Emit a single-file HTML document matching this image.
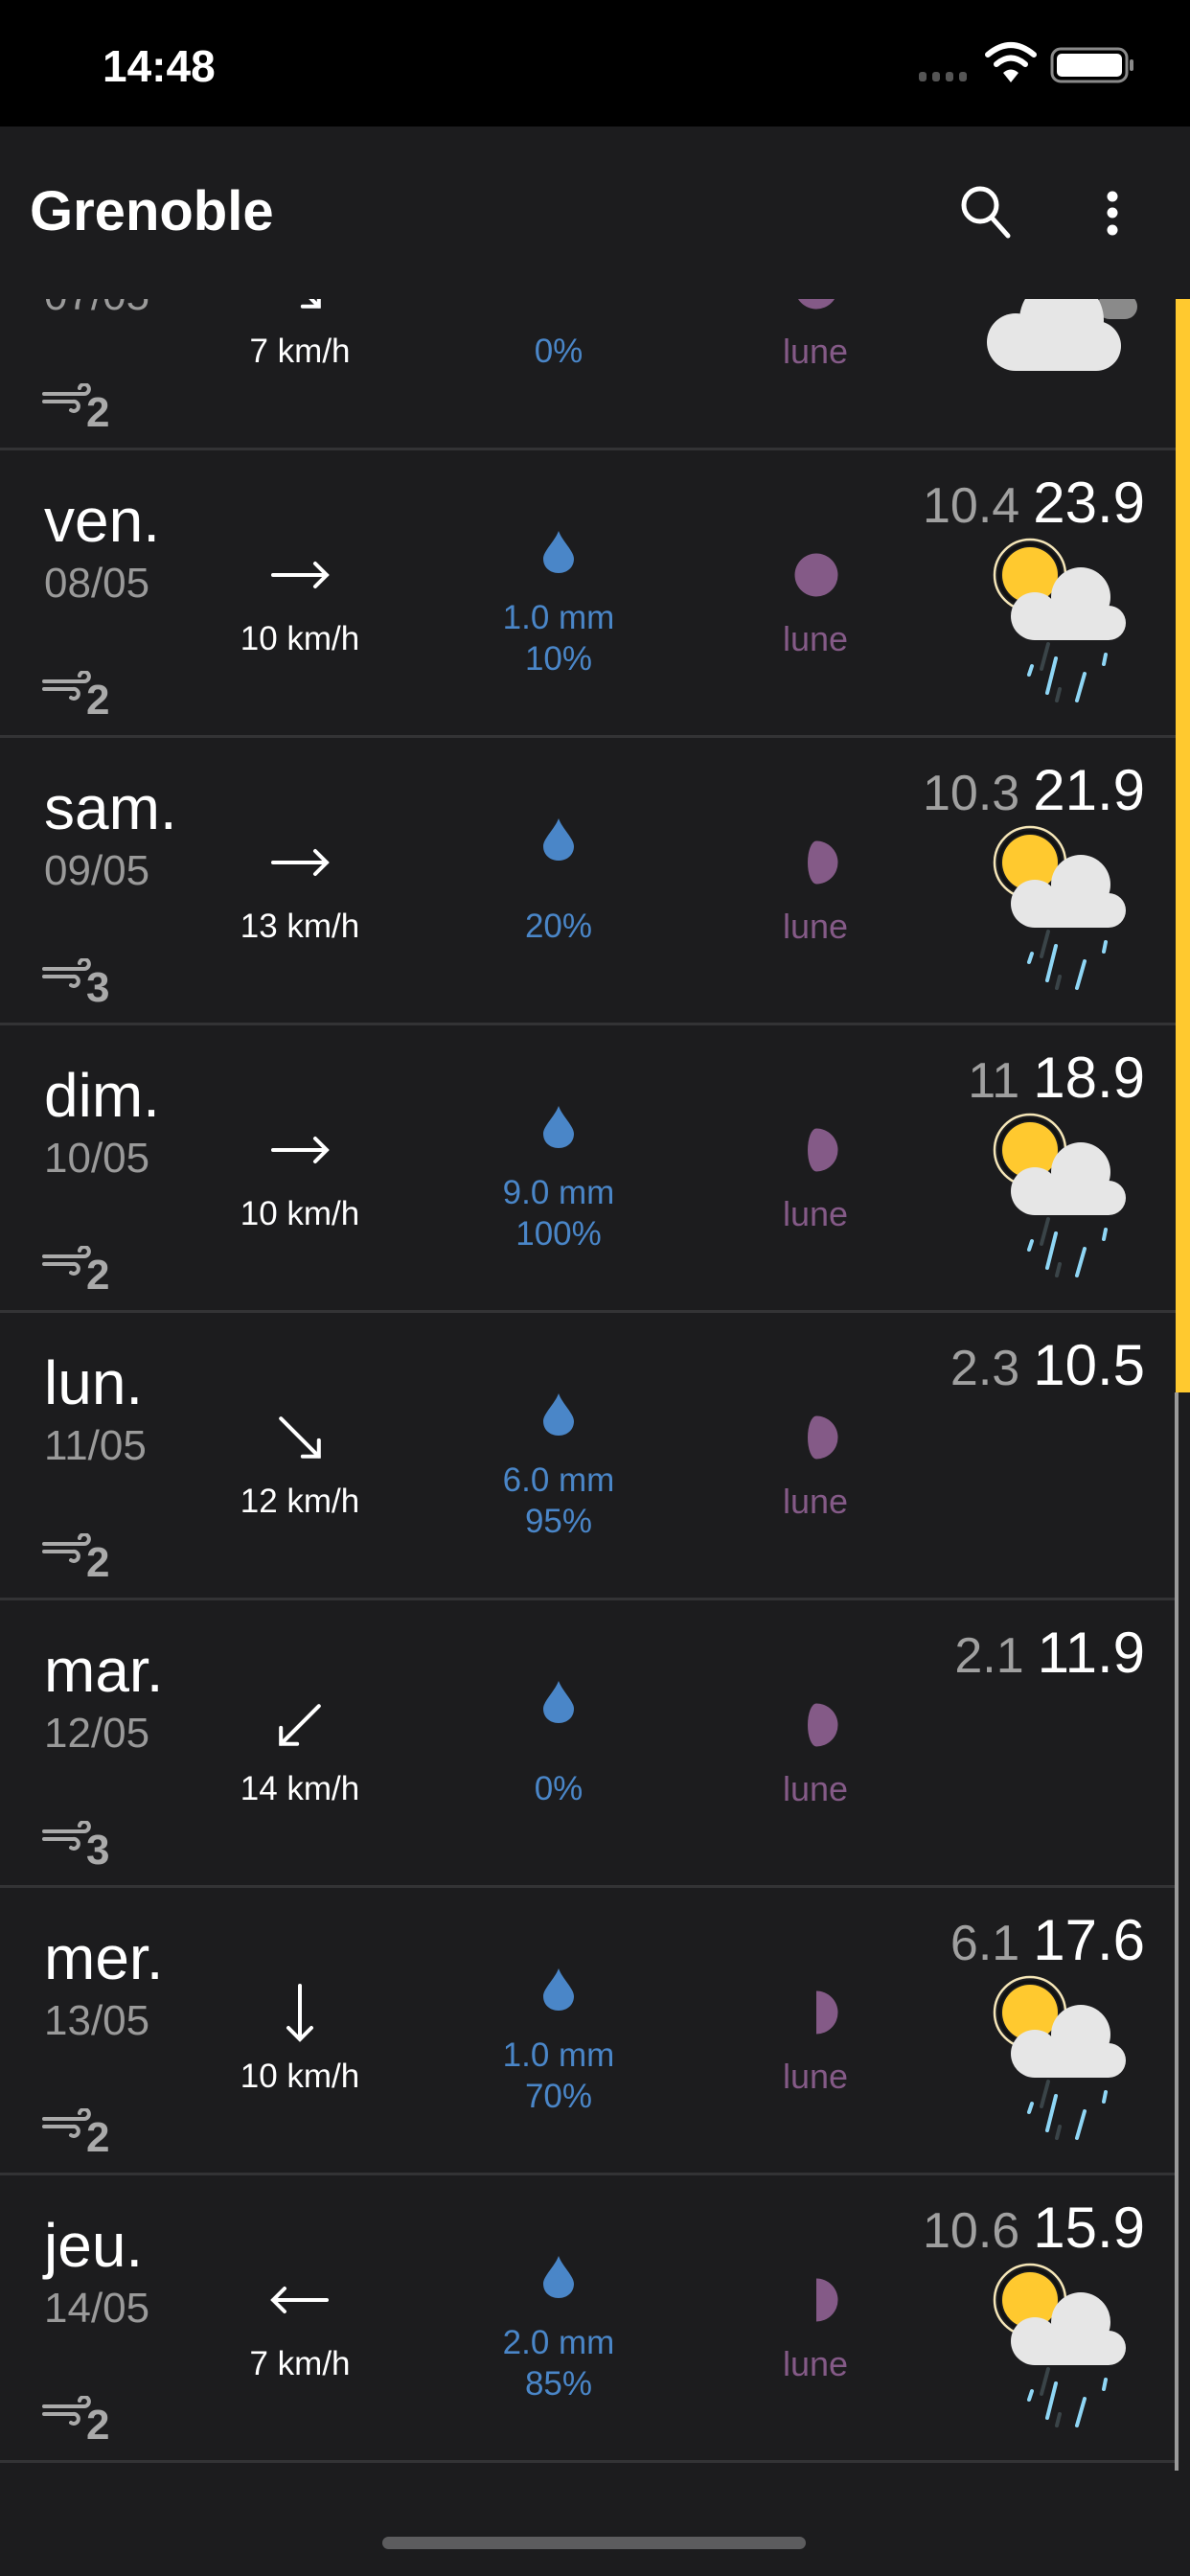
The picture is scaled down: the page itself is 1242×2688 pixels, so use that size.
<!DOCTYPE html>
<html><head><meta charset="utf-8">
<style>
*{margin:0;padding:0;box-sizing:border-box}
html,body{width:1242px;height:2688px;background:#1c1c1e;overflow:hidden;font-family:"Liberation Sans",sans-serif}
.status{position:absolute;left:0;top:0;width:1242px;height:132px;background:#000}
.hdr{position:absolute;left:0;top:132px;width:1242px;height:180px;background:#1c1c1e}
.list{position:absolute;left:0;top:312px;width:1242px;height:2376px;overflow:hidden}
.row{position:absolute;left:0;width:1227px;height:300px}
.sep{position:absolute;left:0;top:298px;width:1227px;height:3px;background:#333335}
.t{position:absolute;line-height:1;white-space:nowrap}
.day{left:46px;top:42px;font-size:64px;color:#fff}
.date{left:46px;top:118px;font-size:44px;color:#9a9a9a}
.ws{left:213px;width:200px;text-align:center;top:180px;font-size:35px;color:#fff}
.p{left:483px;width:200px;text-align:center;font-size:35px;color:#4a86c8}
.lune{left:751px;width:200px;text-align:center;top:180px;font-size:36px;color:#845a87}
.temp{right:32px;top:26px;font-size:60px;color:#fff}
.temp span{font-size:52px;color:#a0a0a0;margin-right:14px}
.wind{position:absolute;left:30px;top:231px}
.arr{position:absolute;left:273px;top:91px}
.drop{position:absolute;left:567px;top:85px}
.moon{position:absolute;left:827px;top:106px}
.wx{position:absolute;left:1030px;top:80px}
</style></head><body>
<div class="status">
  <div class="t" style="left:107px;top:46px;font-size:46px;font-weight:bold;color:#fff">14:48</div>
  <svg style="position:absolute;left:955px;top:40px" width="240" height="56">
    <g fill="#555"><rect x="4" y="35" width="8" height="10" rx="3"/><rect x="18" y="35" width="8" height="10" rx="3"/><rect x="32" y="35" width="8" height="10" rx="3"/><rect x="46" y="35" width="8" height="10" rx="3"/></g>
    <g fill="none" stroke="#fff" stroke-width="6" stroke-linecap="round">
      <path d="M76 17 Q100 -3 124 17"/><path d="M85 27 Q100 14 115 27"/>
    </g>
    <path d="M92 36 Q100 29 108 36 L100 46 Z" fill="#fff"/>
    <rect x="143" y="11" width="78" height="34" rx="9" fill="none" stroke="#8a8a8a" stroke-width="3"/>
    <rect x="148" y="16" width="68" height="24" rx="5" fill="#fff"/>
    <rect x="224" y="22" width="4" height="12" rx="2" fill="#8a8a8a"/>
  </svg>
</div>
<div class="hdr">
  <div class="t" style="left:31px;top:60px;font-size:58px;font-weight:bold;color:#fff">Grenoble</div>
  <svg style="position:absolute;left:995px;top:58px" width="70" height="70">
    <circle cx="28" cy="24" r="17" fill="none" stroke="#fff" stroke-width="5"/>
    <path d="M40 37 L57 56" stroke="#fff" stroke-width="5" stroke-linecap="round"/>
  </svg>
  <svg style="position:absolute;left:1150px;top:58px" width="24" height="60">
    <circle cx="11" cy="15" r="5.5" fill="#fff"/><circle cx="11" cy="32" r="5.5" fill="#fff"/><circle cx="11" cy="50" r="5.5" fill="#fff"/>
  </svg>
</div>

<div class="list">
<div class="row" style="top:-143px">
  <div class="t date">07/05</div>
  <svg class="arr" width="80" height="80"><g transform="rotate(45 40 40)" fill="none" stroke="#fff" stroke-width="4" stroke-linecap="round"><path d="M12 40 H68 M56 28 L68 40 L56 52"/></g></svg>
  <div class="t ws">7 km/h</div>
  <svg class="drop" width="32" height="44"><path d="M16 0 C12 11 0 21 0 29 C0 38 7 44 16 44 C25 44 32 38 32 29 C32 21 20 11 16 0Z" fill="#4a86c8"/></svg>
  <div class="t p" style="top:180px">0%</div>
  <svg class="moon" width="50" height="50"><circle cx="25" cy="25" r="22.5" fill="#845a87"/></svg>
  <div class="t lune">lune</div>
  <svg style="position:absolute;left:0;top:0" width="1227" height="300">
    <rect x="1145" y="138" width="42" height="26" rx="13" fill="#8a8a8a"/>
    <g fill="#e6e6e6"><circle cx="1060" cy="188" r="30"/><circle cx="1108" cy="165" r="44"/><circle cx="1144" cy="192" r="26"/><rect x="1060" y="175" width="84" height="43"/></g>
  </svg>
  <svg class="wind" width="100" height="70"><g fill="none" stroke="#aaa" stroke-width="4" stroke-linecap="round"><path d="M16 11 H58 a5 5 0 1 0 -5 -6"/><path d="M16 19 H46 a5 5 0 1 1 -2 9"/></g><text x="60" y="45" font-family="Liberation Sans" font-weight="bold" font-size="44" fill="#aaa">2</text></svg>
  <div class="sep"></div>
</div>

<div class="row" style="top:157px">
  <div class="t day">ven.</div><div class="t date">08/05</div>
  <svg class="arr" width="80" height="80"><g fill="none" stroke="#fff" stroke-width="4" stroke-linecap="round"><path d="M12 40 H68 M56 28 L68 40 L56 52"/></g></svg>
  <div class="t ws">10 km/h</div>
  <svg class="drop" width="32" height="44"><path d="M16 0 C12 11 0 21 0 29 C0 38 7 44 16 44 C25 44 32 38 32 29 C32 21 20 11 16 0Z" fill="#4a86c8"/></svg>
  <div class="t p" style="top:158px">1.0 mm</div><div class="t p" style="top:201px">10%</div>
  <svg class="moon" width="50" height="50"><circle cx="25" cy="25" r="22.5" fill="#845a87"/></svg>
  <div class="t lune">lune</div>
  <div class="t temp"><span>10.4</span>23.9</div>
  <svg class="wx" width="160" height="185"><g><circle cx="45" cy="51" r="37" fill="none" stroke="#f5e6b8" stroke-width="2.5"/><circle cx="45" cy="51" r="32" fill="none" stroke="#111" stroke-width="3"/><circle cx="45" cy="51" r="29" fill="#ffc92f"/></g><g fill="#e6e6e6"><circle cx="50" cy="94" r="25"/><circle cx="98" cy="74" r="31"/><circle cx="127" cy="101" r="18"/><rect x="50" y="90" width="77" height="29"/></g><g stroke-width="4" stroke-linecap="round"><path d="M64 123 L57 149 M76 170 L73 182" stroke="#3a4448"/><path d="M72 138 L63 174 M47 146 L44 155 M102 154 L94 182 M124 134 L122 144" stroke="#8fd6f5"/></g></svg>
  <svg class="wind" width="100" height="70"><g fill="none" stroke="#aaa" stroke-width="4" stroke-linecap="round"><path d="M16 11 H58 a5 5 0 1 0 -5 -6"/><path d="M16 19 H46 a5 5 0 1 1 -2 9"/></g><text x="60" y="45" font-family="Liberation Sans" font-weight="bold" font-size="44" fill="#aaa">2</text></svg>
  <div class="sep"></div>
</div>

<div class="row" style="top:457px">
  <div class="t day">sam.</div><div class="t date">09/05</div>
  <svg class="arr" width="80" height="80"><g fill="none" stroke="#fff" stroke-width="4" stroke-linecap="round"><path d="M12 40 H68 M56 28 L68 40 L56 52"/></g></svg>
  <div class="t ws">13 km/h</div>
  <svg class="drop" width="32" height="44"><path d="M16 0 C12 11 0 21 0 29 C0 38 7 44 16 44 C25 44 32 38 32 29 C32 21 20 11 16 0Z" fill="#4a86c8"/></svg>
  <div class="t p" style="top:180px">20%</div>
  <svg class="moon" width="50" height="50"><path d="M25 2.5 A22.5 22.5 0 0 1 25 47.5 A9 22.5 0 0 1 25 2.5Z" fill="#845a87"/></svg>
  <div class="t lune">lune</div>
  <div class="t temp"><span>10.3</span>21.9</div>
  <svg class="wx" width="160" height="185"><g><circle cx="45" cy="51" r="37" fill="none" stroke="#f5e6b8" stroke-width="2.5"/><circle cx="45" cy="51" r="32" fill="none" stroke="#111" stroke-width="3"/><circle cx="45" cy="51" r="29" fill="#ffc92f"/></g><g fill="#e6e6e6"><circle cx="50" cy="94" r="25"/><circle cx="98" cy="74" r="31"/><circle cx="127" cy="101" r="18"/><rect x="50" y="90" width="77" height="29"/></g><g stroke-width="4" stroke-linecap="round"><path d="M64 123 L57 149 M76 170 L73 182" stroke="#3a4448"/><path d="M72 138 L63 174 M47 146 L44 155 M102 154 L94 182 M124 134 L122 144" stroke="#8fd6f5"/></g></svg>
  <svg class="wind" width="100" height="70"><g fill="none" stroke="#aaa" stroke-width="4" stroke-linecap="round"><path d="M16 11 H58 a5 5 0 1 0 -5 -6"/><path d="M16 19 H46 a5 5 0 1 1 -2 9"/></g><text x="60" y="45" font-family="Liberation Sans" font-weight="bold" font-size="44" fill="#aaa">3</text></svg>
  <div class="sep"></div>
</div>

<div class="row" style="top:757px">
  <div class="t day">dim.</div><div class="t date">10/05</div>
  <svg class="arr" width="80" height="80"><g fill="none" stroke="#fff" stroke-width="4" stroke-linecap="round"><path d="M12 40 H68 M56 28 L68 40 L56 52"/></g></svg>
  <div class="t ws">10 km/h</div>
  <svg class="drop" width="32" height="44"><path d="M16 0 C12 11 0 21 0 29 C0 38 7 44 16 44 C25 44 32 38 32 29 C32 21 20 11 16 0Z" fill="#4a86c8"/></svg>
  <div class="t p" style="top:158px">9.0 mm</div><div class="t p" style="top:201px">100%</div>
  <svg class="moon" width="50" height="50"><path d="M25 2.5 A22.5 22.5 0 0 1 25 47.5 A9 22.5 0 0 1 25 2.5Z" fill="#845a87"/></svg>
  <div class="t lune">lune</div>
  <div class="t temp"><span>11</span>18.9</div>
  <svg class="wx" width="160" height="185"><g><circle cx="45" cy="51" r="37" fill="none" stroke="#f5e6b8" stroke-width="2.5"/><circle cx="45" cy="51" r="32" fill="none" stroke="#111" stroke-width="3"/><circle cx="45" cy="51" r="29" fill="#ffc92f"/></g><g fill="#e6e6e6"><circle cx="50" cy="94" r="25"/><circle cx="98" cy="74" r="31"/><circle cx="127" cy="101" r="18"/><rect x="50" y="90" width="77" height="29"/></g><g stroke-width="4" stroke-linecap="round"><path d="M64 123 L57 149 M76 170 L73 182" stroke="#3a4448"/><path d="M72 138 L63 174 M47 146 L44 155 M102 154 L94 182 M124 134 L122 144" stroke="#8fd6f5"/></g></svg>
  <svg class="wind" width="100" height="70"><g fill="none" stroke="#aaa" stroke-width="4" stroke-linecap="round"><path d="M16 11 H58 a5 5 0 1 0 -5 -6"/><path d="M16 19 H46 a5 5 0 1 1 -2 9"/></g><text x="60" y="45" font-family="Liberation Sans" font-weight="bold" font-size="44" fill="#aaa">2</text></svg>
  <div class="sep"></div>
</div>

<div class="row" style="top:1057px">
  <div class="t day">lun.</div><div class="t date">11/05</div>
  <svg class="arr" width="80" height="80"><g transform="rotate(45 40 40)" fill="none" stroke="#fff" stroke-width="4" stroke-linecap="round"><path d="M12 40 H68 M56 28 L68 40 L56 52"/></g></svg>
  <div class="t ws">12 km/h</div>
  <svg class="drop" width="32" height="44"><path d="M16 0 C12 11 0 21 0 29 C0 38 7 44 16 44 C25 44 32 38 32 29 C32 21 20 11 16 0Z" fill="#4a86c8"/></svg>
  <div class="t p" style="top:158px">6.0 mm</div><div class="t p" style="top:201px">95%</div>
  <svg class="moon" width="50" height="50"><path d="M25 2.5 A22.5 22.5 0 0 1 25 47.5 A9 22.5 0 0 1 25 2.5Z" fill="#845a87"/></svg>
  <div class="t lune">lune</div>
  <div class="t temp"><span>2.3</span>10.5</div>
  <svg class="wind" width="100" height="70"><g fill="none" stroke="#aaa" stroke-width="4" stroke-linecap="round"><path d="M16 11 H58 a5 5 0 1 0 -5 -6"/><path d="M16 19 H46 a5 5 0 1 1 -2 9"/></g><text x="60" y="45" font-family="Liberation Sans" font-weight="bold" font-size="44" fill="#aaa">2</text></svg>
  <div class="sep"></div>
</div>

<div class="row" style="top:1357px">
  <div class="t day">mar.</div><div class="t date">12/05</div>
  <svg class="arr" width="80" height="80"><g transform="rotate(135 40 40)" fill="none" stroke="#fff" stroke-width="4" stroke-linecap="round"><path d="M12 40 H68 M56 28 L68 40 L56 52"/></g></svg>
  <div class="t ws">14 km/h</div>
  <svg class="drop" width="32" height="44"><path d="M16 0 C12 11 0 21 0 29 C0 38 7 44 16 44 C25 44 32 38 32 29 C32 21 20 11 16 0Z" fill="#4a86c8"/></svg>
  <div class="t p" style="top:180px">0%</div>
  <svg class="moon" width="50" height="50"><path d="M25 2.5 A22.5 22.5 0 0 1 25 47.5 A9 22.5 0 0 1 25 2.5Z" fill="#845a87"/></svg>
  <div class="t lune">lune</div>
  <div class="t temp"><span>2.1</span>11.9</div>
  <svg class="wind" width="100" height="70"><g fill="none" stroke="#aaa" stroke-width="4" stroke-linecap="round"><path d="M16 11 H58 a5 5 0 1 0 -5 -6"/><path d="M16 19 H46 a5 5 0 1 1 -2 9"/></g><text x="60" y="45" font-family="Liberation Sans" font-weight="bold" font-size="44" fill="#aaa">3</text></svg>
  <div class="sep"></div>
</div>

<div class="row" style="top:1657px">
  <div class="t day">mer.</div><div class="t date">13/05</div>
  <svg class="arr" width="80" height="80"><g transform="rotate(90 40 40)" fill="none" stroke="#fff" stroke-width="4" stroke-linecap="round"><path d="M12 40 H68 M56 28 L68 40 L56 52"/></g></svg>
  <div class="t ws">10 km/h</div>
  <svg class="drop" width="32" height="44"><path d="M16 0 C12 11 0 21 0 29 C0 38 7 44 16 44 C25 44 32 38 32 29 C32 21 20 11 16 0Z" fill="#4a86c8"/></svg>
  <div class="t p" style="top:158px">1.0 mm</div><div class="t p" style="top:201px">70%</div>
  <svg class="moon" width="50" height="50"><path d="M25 2.5 A22.5 22.5 0 0 1 25 47.5 Z" fill="#845a87"/></svg>
  <div class="t lune">lune</div>
  <div class="t temp"><span>6.1</span>17.6</div>
  <svg class="wx" width="160" height="185"><g><circle cx="45" cy="51" r="37" fill="none" stroke="#f5e6b8" stroke-width="2.5"/><circle cx="45" cy="51" r="32" fill="none" stroke="#111" stroke-width="3"/><circle cx="45" cy="51" r="29" fill="#ffc92f"/></g><g fill="#e6e6e6"><circle cx="50" cy="94" r="25"/><circle cx="98" cy="74" r="31"/><circle cx="127" cy="101" r="18"/><rect x="50" y="90" width="77" height="29"/></g><g stroke-width="4" stroke-linecap="round"><path d="M64 123 L57 149 M76 170 L73 182" stroke="#3a4448"/><path d="M72 138 L63 174 M47 146 L44 155 M102 154 L94 182 M124 134 L122 144" stroke="#8fd6f5"/></g></svg>
  <svg class="wind" width="100" height="70"><g fill="none" stroke="#aaa" stroke-width="4" stroke-linecap="round"><path d="M16 11 H58 a5 5 0 1 0 -5 -6"/><path d="M16 19 H46 a5 5 0 1 1 -2 9"/></g><text x="60" y="45" font-family="Liberation Sans" font-weight="bold" font-size="44" fill="#aaa">2</text></svg>
  <div class="sep"></div>
</div>

<div class="row" style="top:1957px">
  <div class="t day">jeu.</div><div class="t date">14/05</div>
  <svg class="arr" width="80" height="80"><g transform="rotate(180 40 40)" fill="none" stroke="#fff" stroke-width="4" stroke-linecap="round"><path d="M12 40 H68 M56 28 L68 40 L56 52"/></g></svg>
  <div class="t ws">7 km/h</div>
  <svg class="drop" width="32" height="44"><path d="M16 0 C12 11 0 21 0 29 C0 38 7 44 16 44 C25 44 32 38 32 29 C32 21 20 11 16 0Z" fill="#4a86c8"/></svg>
  <div class="t p" style="top:158px">2.0 mm</div><div class="t p" style="top:201px">85%</div>
  <svg class="moon" width="50" height="50"><path d="M25 2.5 A22.5 22.5 0 0 1 25 47.5 Z" fill="#845a87"/></svg>
  <div class="t lune">lune</div>
  <div class="t temp"><span>10.6</span>15.9</div>
  <svg class="wx" width="160" height="185"><g><circle cx="45" cy="51" r="37" fill="none" stroke="#f5e6b8" stroke-width="2.5"/><circle cx="45" cy="51" r="32" fill="none" stroke="#111" stroke-width="3"/><circle cx="45" cy="51" r="29" fill="#ffc92f"/></g><g fill="#e6e6e6"><circle cx="50" cy="94" r="25"/><circle cx="98" cy="74" r="31"/><circle cx="127" cy="101" r="18"/><rect x="50" y="90" width="77" height="29"/></g><g stroke-width="4" stroke-linecap="round"><path d="M64 123 L57 149 M76 170 L73 182" stroke="#3a4448"/><path d="M72 138 L63 174 M47 146 L44 155 M102 154 L94 182 M124 134 L122 144" stroke="#8fd6f5"/></g></svg>
  <svg class="wind" width="100" height="70"><g fill="none" stroke="#aaa" stroke-width="4" stroke-linecap="round"><path d="M16 11 H58 a5 5 0 1 0 -5 -6"/><path d="M16 19 H46 a5 5 0 1 1 -2 9"/></g><text x="60" y="45" font-family="Liberation Sans" font-weight="bold" font-size="44" fill="#aaa">2</text></svg>
  <div class="sep"></div>
</div>
</div>

<div style="position:absolute;left:1227px;top:312px;width:15px;height:1141px;background:#ffc92f"></div>
<div style="position:absolute;left:1226px;top:1453px;width:4px;height:1125px;background:#9a9a9a"></div>
<div style="position:absolute;left:399px;top:2647px;width:442px;height:13px;border-radius:7px;background:#5c5c5e"></div>
</body></html>
